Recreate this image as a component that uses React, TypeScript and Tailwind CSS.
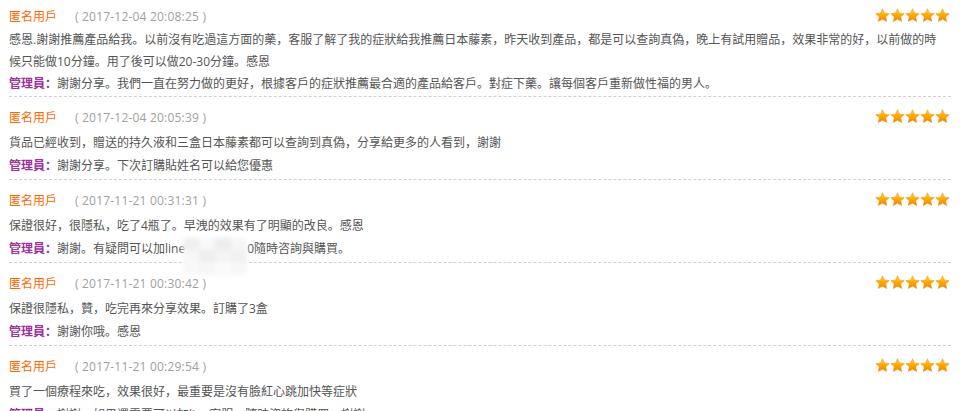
import React, { useId } from "react";

const Star = () => {
  const id = useId();
  return (
    <svg viewBox="0 0 24 24" className="w-[15px] h-[15px] block">
      <defs>
        <linearGradient id={id} x1="0" y1="0" x2="0" y2="1">
          <stop offset="0%" stopColor="#ffd84f" />
          <stop offset="45%" stopColor="#ffac00" />
          <stop offset="100%" stopColor="#f28300" />
        </linearGradient>
      </defs>
      <path
        d="M12 1.2l3.2 7 7.6.8-5.7 5.1 1.7 7.6L12 17.8l-6.8 3.9 1.7-7.6L1.2 9l7.6-.8z"
        fill={`url(#${id})`}
        stroke="#ea8c10"
        strokeWidth="0.8"
        strokeLinejoin="round"
      />
    </svg>
  );
};

const Stars = () => (
  <div className="flex mb-[4px] mr-[1px]">
    <Star />
    <Star />
    <Star />
    <Star />
    <Star />
  </div>
);

type Props = {
  date: string;
  text: string;
  reply: React.ReactNode;
  first?: boolean;
};

const Review = ({ date, text, reply, first }: Props) => (
  <div
    className={
      first
        ? "pt-[6px] pb-[1px] border-b border-dashed border-[#d0d0d0]"
        : "pt-[10px] pb-[2px] border-b border-dashed border-[#d0d0d0]"
    }
  >
    <div className="flex items-center justify-between h-[22px]">
      <div className="flex items-center">
        <span className="text-[#ff6600] w-[66px]">匿名用戶</span>
        <span className="text-[#a0a0a0] tracking-[0.2px]">{date}</span>
      </div>
      <Stars />
    </div>
    <p className={first ? "mt-[1px] pr-[6px] text-[#555]" : "mt-[3px] pr-[6px] text-[#555]"}>{text}</p>
    <p className={first ? "text-[#555]" : "mt-[1px] text-[#555]"}>
      <span className="text-[#993399] font-bold">管理員：</span>
      {reply}
    </p>
  </div>
);

const Blur = () => (
  <span className="relative inline-block w-[62px] h-[14px] align-middle">
    <span className="absolute left-[-2px] top-[-5px] w-[64px] h-[37px] rounded-[5px] bg-[#f5f5f5] blur-[2px] flex flex-wrap overflow-hidden">
      <span className="w-[16px] h-[12px] bg-[#efefef]" />
      <span className="w-[16px] h-[12px] bg-[#f8f8f8]" />
      <span className="w-[16px] h-[12px] bg-[#ededed]" />
      <span className="w-[16px] h-[12px] bg-[#f6f6f6]" />
      <span className="w-[16px] h-[12px] bg-[#f7f7f7]" />
      <span className="w-[16px] h-[12px] bg-[#eeeeee]" />
      <span className="w-[16px] h-[12px] bg-[#f4f4f4]" />
      <span className="w-[16px] h-[12px] bg-[#f1f1f1]" />
      <span className="w-[16px] h-[12px] bg-[#f9f9f9]" />
      <span className="w-[16px] h-[12px] bg-[#f6f6f6]" />
      <span className="w-[16px] h-[12px] bg-[#fafafa]" />
      <span className="w-[16px] h-[12px] bg-[#f7f7f7]" />
    </span>
  </span>
);

export default function App() {
  return (
    <div
      className="w-[968px] h-[411px] overflow-hidden bg-white pl-[9px] pr-[17px] text-[12px] leading-[22px]"
      style={{ fontFamily: '"Open Sans", "Noto Sans CJK SC", "Noto Sans CJK TC", sans-serif' }}
    >
      <Review
        first
        date="( 2017-12-04 20:08:25 )"
        text="感恩.謝謝推薦產品給我。以前沒有吃過這方面的藥，客服了解了我的症狀給我推薦日本藤素，昨天收到產品，都是可以查詢真偽，晚上有試用贈品，效果非常的好，以前做的時候只能做10分鐘。用了後可以做20-30分鐘。感恩"
        reply="謝謝分享。我們一直在努力做的更好，根據客戶的症狀推薦最合適的產品給客戶。對症下藥。讓每個客戶重新做性福的男人。"
      />
      <Review
        date="( 2017-12-04 20:05:39 )"
        text="貨品已經收到，贈送的持久液和三盒日本藤素都可以查詢到真偽，分享給更多的人看到，謝謝"
        reply="謝謝分享。下次訂購貼姓名可以給您優惠"
      />
      <Review
        date="( 2017-11-21 00:31:31 )"
        text="保證很好，很隱私，吃了4瓶了。早洩的效果有了明顯的改良。感恩"
        reply={
          <>
            謝謝。有疑問可以加line
            <Blur />
            0隨時咨詢與購買。
          </>
        }
      />
      <Review
        date="( 2017-11-21 00:30:42 )"
        text="保證很隱私，贊，吃完再來分享效果。訂購了3盒"
        reply="謝謝你哦。感恩"
      />
      <Review
        date="( 2017-11-21 00:29:54 )"
        text="買了一個療程來吃，效果很好，最重要是沒有臉紅心跳加快等症狀"
        reply="謝謝。如果還需要可以加line客服，隨時咨詢與購買。謝謝"
      />
    </div>
  );
}
